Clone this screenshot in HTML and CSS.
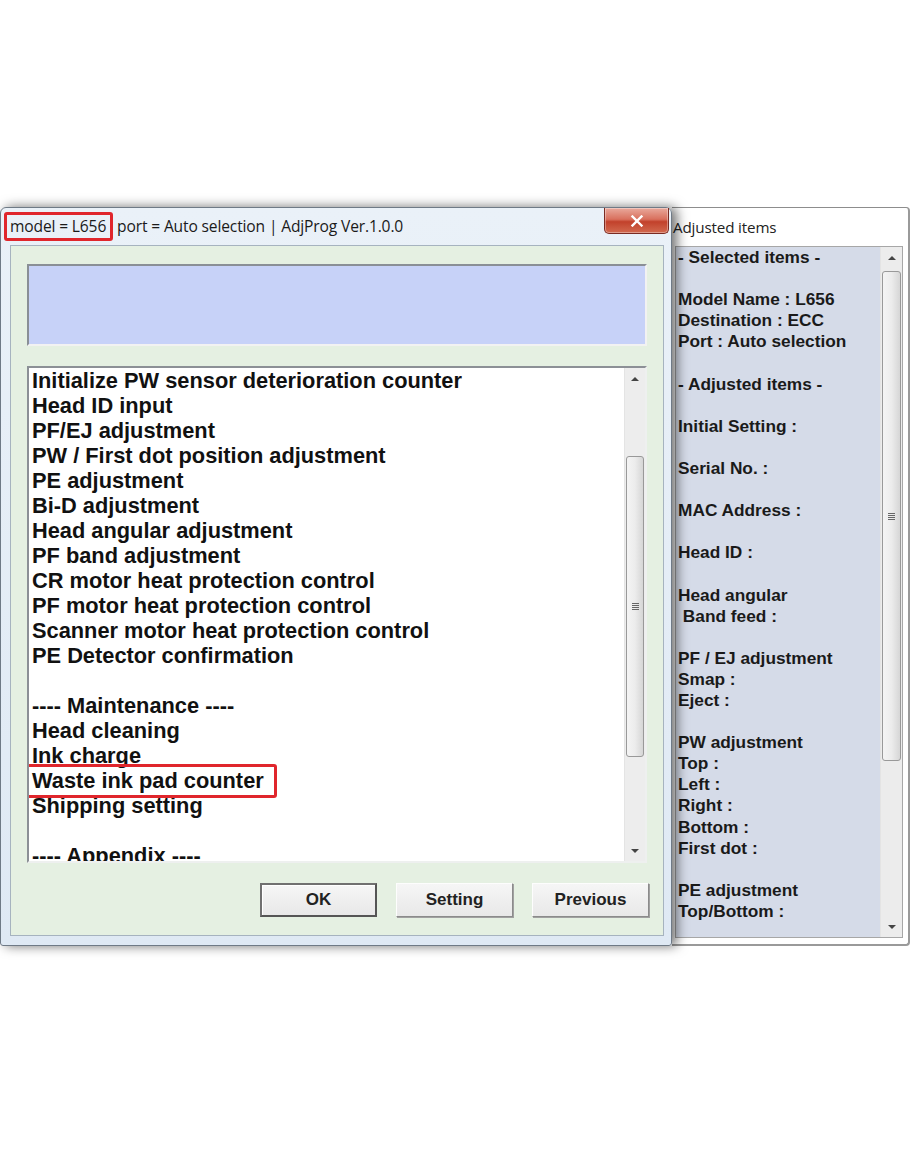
FILE: index.html
```html
<!DOCTYPE html>
<html>
<head>
<meta charset="utf-8">
<title>AdjProg</title>
<link rel="stylesheet" href="styles.css">
</head>
<body>
<div class="page">
  <div class="shot">
    <div class="dialog">
      <div class="titlebar">
        <span class="title"><span class="title-hl">model = L656</span> port = Auto selection | AdjProg Ver.1.0.0</span>
        <div class="close">
          <svg width="16" height="12" viewBox="0 0 16 12"><path d="M3.5 1.5 L12.5 10.5 M12.5 1.5 L3.5 10.5" stroke="#fff" stroke-width="2.4" stroke-linecap="square"/></svg>
        </div>
      </div>
      <div class="client">
        <div class="msgbox"></div>
        <div class="listbox">
          <ul class="items">
            <li>Initialize PW sensor deterioration counter</li>
            <li>Head ID input</li>
            <li>PF/EJ adjustment</li>
            <li>PW / First dot position adjustment</li>
            <li>PE adjustment</li>
            <li>Bi-D adjustment</li>
            <li>Head angular adjustment</li>
            <li>PF band adjustment</li>
            <li>CR motor heat protection control</li>
            <li>PF motor heat protection control</li>
            <li>Scanner motor heat protection control</li>
            <li>PE Detector confirmation</li>
            <li>&nbsp;</li>
            <li>---- Maintenance ----</li>
            <li>Head cleaning</li>
            <li>Ink charge</li>
            <li><span class="marked">Waste ink pad counter</span></li>
            <li>Shipping setting</li>
            <li>&nbsp;</li>
            <li>---- Appendix ----</li>
          </ul>
          <div class="vscroll main-scroll">
            <div class="sb-btn"><span class="arrow-up"></span></div>
            <div class="sb-track">
              <div class="sb-gap main-gap-top"></div>
              <div class="sb-thumb main-thumb"><span class="grip"></span></div>
              <div class="sb-gap fill"></div>
            </div>
            <div class="sb-btn"><span class="arrow-down"></span></div>
          </div>
        </div>
        <div class="buttons">
          <div class="btn default">OK</div>
          <div class="btn">Setting</div>
          <div class="btn">Previous</div>
        </div>
      </div>
    </div>
    <div class="side">
      <div class="side-title">Adjusted items</div>
      <div class="side-list">
        <div class="side-text">
          <div>- Selected items -</div>
          <div>&nbsp;</div>
          <div>Model Name : L656</div>
          <div>Destination : ECC</div>
          <div>Port : Auto selection</div>
          <div>&nbsp;</div>
          <div>- Adjusted items -</div>
          <div>&nbsp;</div>
          <div>Initial Setting :</div>
          <div>&nbsp;</div>
          <div>Serial No. :</div>
          <div>&nbsp;</div>
          <div>MAC Address :</div>
          <div>&nbsp;</div>
          <div>Head ID :</div>
          <div>&nbsp;</div>
          <div>Head angular</div>
          <div>&nbsp;Band feed :</div>
          <div>&nbsp;</div>
          <div>PF / EJ adjustment</div>
          <div>Smap :</div>
          <div>Eject :</div>
          <div>&nbsp;</div>
          <div>PW adjustment</div>
          <div>Top :</div>
          <div>Left :</div>
          <div>Right :</div>
          <div>Bottom :</div>
          <div>First dot :</div>
          <div>&nbsp;</div>
          <div>PE adjustment</div>
          <div>Top/Bottom :</div>
        </div>
        <div class="vscroll side-scroll">
          <div class="sb-btn"><span class="arrow-up"></span></div>
          <div class="sb-track">
            <div class="sb-thumb side-thumb"><span class="grip"></span></div>
            <div class="sb-gap fill"></div>
          </div>
          <div class="sb-btn"><span class="arrow-down"></span></div>
        </div>
      </div>
      <div class="side-bottom"></div>
    </div>
  </div>
</div>
</body>
</html>
```

FILE: styles.css
```css
* { box-sizing: border-box; }
html, body { margin: 0; padding: 0; background: #ffffff; }
body { width: 910px; height: 1155px; overflow: hidden; }

.page { padding-top: 207px; }

.shot {
  display: flex;
  height: 739px;
  width: 910px;
}

/* ---------- main dialog ---------- */
.dialog {
  position: relative;
  z-index: 2;
  width: 672px;
  height: 739px;
  display: flex;
  flex-direction: column;
  background: linear-gradient(to bottom, #eaf1f8 0%, #dfe9f4 100%);
  border: 1px solid #6f7a86;
  border-radius: 6px 6px 3px 3px;
  box-shadow: 5px 0 12px rgba(0, 0, 0, 0.55);
  padding: 0 7px 9px 9px;
}

.titlebar {
  height: 37px;
  display: flex;
  align-items: center;
  position: relative;
}

.title {
  font-family: "Open Sans", "Noto Sans", sans-serif;
  font-size: 15.6px;
  color: #1a1a1a;
  padding-left: 1px;
  letter-spacing: -0.15px;
}

.title-hl {
  display: inline-block;
  padding: 1px 4px 2px 3px;
  margin-left: -7px;
  border: 3px solid #e0262c;
  border-radius: 3px;
  line-height: 20px;
}

.close {
  position: absolute;
  right: -5px;
  top: 0;
  width: 65px;
  height: 26px;
  border: 1px solid #7a2b22;
  border-top: none;
  border-radius: 0 0 5px 5px;
  background: linear-gradient(to bottom, #e9a99c 0%, #d9705d 45%, #c2412b 55%, #d26a4f 100%);
  display: flex;
  align-items: center;
  justify-content: center;
  box-shadow: inset 0 0 0 1px rgba(255, 255, 255, 0.35);
}

.client {
  flex: 1;
  background: #e5f0e2;
  border: 1px solid #a6b3bf;
  display: flex;
  flex-direction: column;
  padding: 18px 16px 0 16px;
}

.msgbox {
  height: 82px;
  background: #c7d2f8;
  border: 2px solid;
  border-color: #8a8f96 #f2f2f2 #f2f2f2 #8a8f96;
}

.listbox {
  margin-top: 20px;
  height: 497px;
  background: #ffffff;
  border: 2px solid;
  border-color: #8c9096 #eef0ef #eef0ef #8c9096;
  display: flex;
  overflow: hidden;
}

.items {
  flex: 1;
  list-style: none;
  margin: 0;
  padding: 0 0 0 3px;
  font-family: "Liberation Sans", Arial, sans-serif;
  font-weight: bold;
  font-size: 21.8px;
  line-height: 25px;
  color: #111;
  white-space: nowrap;
  overflow: hidden;
}

.items li { height: 25px; }

.marked {
  position: relative;
}

.marked::after {
  content: "";
  position: absolute;
  left: -8px;
  right: -13px;
  top: -4px;
  bottom: -5px;
  border: 3px solid #e0262c;
  border-radius: 3px;
}

/* ---------- scrollbars ---------- */
.vscroll {
  width: 21px;
  flex: none;
  display: flex;
  flex-direction: column;
  background: #ededed;
  border-left: 1px solid #e4e4e4;
}

.sb-btn {
  height: 21px;
  display: flex;
  align-items: center;
  justify-content: center;
  flex: none;
}

.arrow-up, .arrow-down {
  width: 0;
  height: 0;
  border-left: 4px solid transparent;
  border-right: 4px solid transparent;
}
.arrow-up { border-bottom: 4px solid #444; }
.arrow-down { border-top: 4px solid #444; }

.sb-track {
  flex: 1;
  display: flex;
  flex-direction: column;
}

.sb-gap.fill { flex: 1; }
.main-gap-top { height: 67px; flex: none; }

.sb-thumb {
  flex: none;
  margin: 0 1px;
  border: 1px solid #999;
  border-radius: 3px;
  background: linear-gradient(to right, #f4f4f4 0%, #ececec 50%, #d6d6d6 100%);
  display: flex;
  align-items: center;
  justify-content: center;
}

.main-thumb { height: 301px; }
.side-thumb { height: 490px; margin-top: 3px; }

.grip {
  width: 7px;
  height: 7px;
  background: repeating-linear-gradient(to bottom, #666 0, #666 1px, transparent 1px, transparent 2px);
}

/* ---------- buttons ---------- */
.buttons {
  margin-top: 20px;
  margin-right: -2px;
  display: flex;
  justify-content: flex-end;
  gap: 19px;
}

.btn {
  width: 117px;
  height: 34px;
  display: flex;
  align-items: center;
  justify-content: center;
  font-family: "Liberation Sans", Arial, sans-serif;
  font-weight: bold;
  font-size: 17px;
  color: #222;
  background: linear-gradient(to bottom, #f6f6f6, #e8e8e8);
  border: 1px solid;
  border-color: #fdfdfd #8b8b8b #8b8b8b #fdfdfd;
  box-shadow: 1px 1px 0 #a0a0a0;
}

.btn.default {
  border: 2px solid;
  border-color: #707070 #555 #555 #707070;
  box-shadow: inset 1px 1px 0 #fff;
}

/* ---------- side panel ---------- */
.side {
  width: 238px;
  height: 739px;
  display: flex;
  flex-direction: column;
  background: #ffffff;
  border-top: 1px solid #8d8d8d;
  border-right: 2px solid #9a9a9a;
  border-bottom: 2px solid #9a9a9a;
  border-radius: 0 4px 4px 0;
}

.side-title {
  height: 38px;
  flex: none;
  display: flex;
  align-items: center;
  padding-left: 1px;
  font-family: "Open Sans", "Noto Sans", sans-serif;
  font-size: 15.2px;
  letter-spacing: -0.15px;
  color: #222;
}

.side-list {
  height: 692px;
  flex: none;
  margin: 0 5px 0 3px;
  background: #d5dbe8;
  border: 1px solid #a7a7a7;
  display: flex;
  overflow: hidden;
}

.side-text {
  flex: 1;
  padding-left: 2px;
  font-family: "Liberation Sans", Arial, sans-serif;
  font-weight: bold;
  font-size: 17.3px;
  line-height: 21.1px;
  color: #1a1a1a;
  white-space: nowrap;
  overflow: hidden;
}

.side-text div { height: 21.1px; }

.side-scroll {
  width: 22px;
  background: #ececec;
}

.side-bottom { flex: 1; }
```
